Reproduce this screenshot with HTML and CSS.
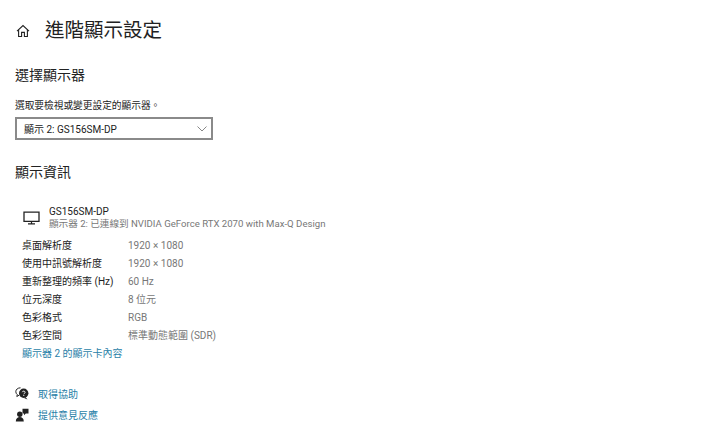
FILE: index.html
```html
<!DOCTYPE html>
<html lang="zh-Hant">
<head>
  <meta charset="UTF-8"/>
  <title>進階顯示設定</title>
  <link rel="stylesheet" href="styles.css">
</head>
<body>

<header class="page-head">
  <svg class="home-icon" width="14" height="14" viewBox="0 0 14 14" fill="none" stroke="#222" stroke-width="1.1">
    <path d="M1 7.2 7 1.500l6 5.700"/>
    <path d="M2.600 5.800v6.700h3V8.400h2.800v4.100h3V5.800"/>
  </svg>
  <h1>進階顯示設定</h1>
</header>

<section class="choose">
  <h2>選擇顯示器</h2>
  <p class="hint">選取要檢視或變更設定的顯示器。</p>
  <div class="select">
    <span>顯示 2: GS156SM-DP</span>
    <svg width="10" height="6" viewBox="0 0 10 6" fill="none" stroke="#888" stroke-width="1">
      <path d="M.5.5 5 5 9.500.5"/>
    </svg>
  </div>
</section>

<section class="info">
  <h2>顯示資訊</h2>
  <div class="monitor">
    <svg class="monitor-icon" width="17" height="14" viewBox="0 0 17 14" fill="none" stroke="#222">
      <path stroke-width="1.3" d="M1 1.200h15v9.200H1z"/>
      <path stroke-width="1.2" d="M8.500 10.500v2M5 12.800h7"/>
    </svg>
    <div class="monitor-text">
      <div class="monitor-name">GS156SM-DP</div>
      <div class="monitor-sub">顯示器 2: 已連線到 NVIDIA GeForce RTX 2070 with Max-Q Design</div>
    </div>
  </div>
  <dl class="specs">
    <dt>桌面解析度</dt><dd>1920 × 1080</dd>
    <dt>使用中訊號解析度</dt><dd>1920 × 1080</dd>
    <dt>重新整理的頻率 (Hz)</dt><dd>60 Hz</dd>
    <dt>位元深度</dt><dd>8 位元</dd>
    <dt>色彩格式</dt><dd>RGB</dd>
    <dt>色彩空間</dt><dd>標準動態範圍 (SDR)</dd>
  </dl>
  <a class="link adapter" href="#">顯示器 2 的顯示卡內容</a>
</section>

<section class="help">
  <div class="help-row">
    <svg width="14" height="13" viewBox="0 0 14 13">
      <path d="M5.500.8C2.800.8.800 2.500.800 4.700c0 1.200.6 2.200 1.500 2.900L1.800 9.500l2.300-1.300" fill="none" stroke="#222" stroke-width="1"/>
      <circle cx="8.700" cy="6.300" r="4.700" fill="#222"/>
      <path d="M10.500 10l2 2.500-3.500-1.500z" fill="#222"/>
      <path d="M7.300 5.200c.2-1.500 2.800-1.400 2.800.1 0 1-1.300 1-1.300 2" fill="none" stroke="#fff" stroke-width=".9"/>
      <circle cx="8.800" cy="8.500" r=".6" fill="#fff"/>
    </svg>
    <a class="link" href="#">取得協助</a>
  </div>
  <div class="help-row">
    <svg width="14" height="14" viewBox="0 0 14 14" fill="#222">
      <circle cx="4.800" cy="6.300" r="2.700"/>
      <path d="M.8 13.500c0-3 1.700-4.500 4-4.500s4 1.500 4 4.500z"/>
      <path d="M7.500.8h6v4.700h-2.700L9 7.200V5.500H7.500z"/>
    </svg>
    <a class="link" href="#">提供意見反應</a>
  </div>
</section>

</body>
</html>
```

FILE: styles.css
```css
body {
  margin: 0;
  width: 720px;
  height: 440px;
  overflow: hidden;
  background: #fff;
  color: #222;
  font-family: Roboto, "Noto Sans CJK TC", sans-serif;
  font-size: 10px;
}
h1, h2, p, dl, dd {
  margin: 0;
  font-weight: 400;
}
.page-head {
  display: flex;
  align-items: center;
  height: 30px;
  padding: 16px 0 0 16px;
}
.home-icon {
  margin-right: 15px;
}
h1 {
  font-size: 19.500px;
  line-height: 30px;
}
h2 {
  font-size: 14px;
  line-height: 20px;
}
.choose {
  padding: 19px 15px 0;
}
.hint {
  margin-top: 13px;
  line-height: 16px;
  font-size: 9.700px;
}
.select {
  display: flex;
  justify-content: space-between;
  align-items: center;
  box-sizing: border-box;
  width: 198px;
  height: 23px;
  margin-top: 3px;
  padding: 0 4px 0 7px;
  border: 2px solid #8a8a8a;
}
.info {
  padding: 22px 15px 0;
}
.monitor {
  display: flex;
  align-items: center;
  margin-top: 23px;
  padding-left: 8px;
}
.monitor-icon {
  margin-right: 9px;
}
.monitor-name {
  line-height: 13px;
}
.monitor-sub {
  line-height: 12px;
  font-size: 9.600px;
  color: #777;
}
.specs {
  display: grid;
  grid-template-columns: 106px 1fr;
  grid-auto-rows: 18px;
  align-items: baseline;
  line-height: 18px;
  margin-top: 7px;
  padding-left: 7px;
}
.specs dd {
  color: #777;
}
.link {
  color: #2a7fa8;
  text-decoration: none;
}
.adapter {
  display: block;
  padding-left: 7px;
  line-height: 18px;
}
.help {
  padding: 20px 15px 0;
}
.help-row {
  display: flex;
  align-items: center;
  gap: 9px;
  height: 21px;
}
```
